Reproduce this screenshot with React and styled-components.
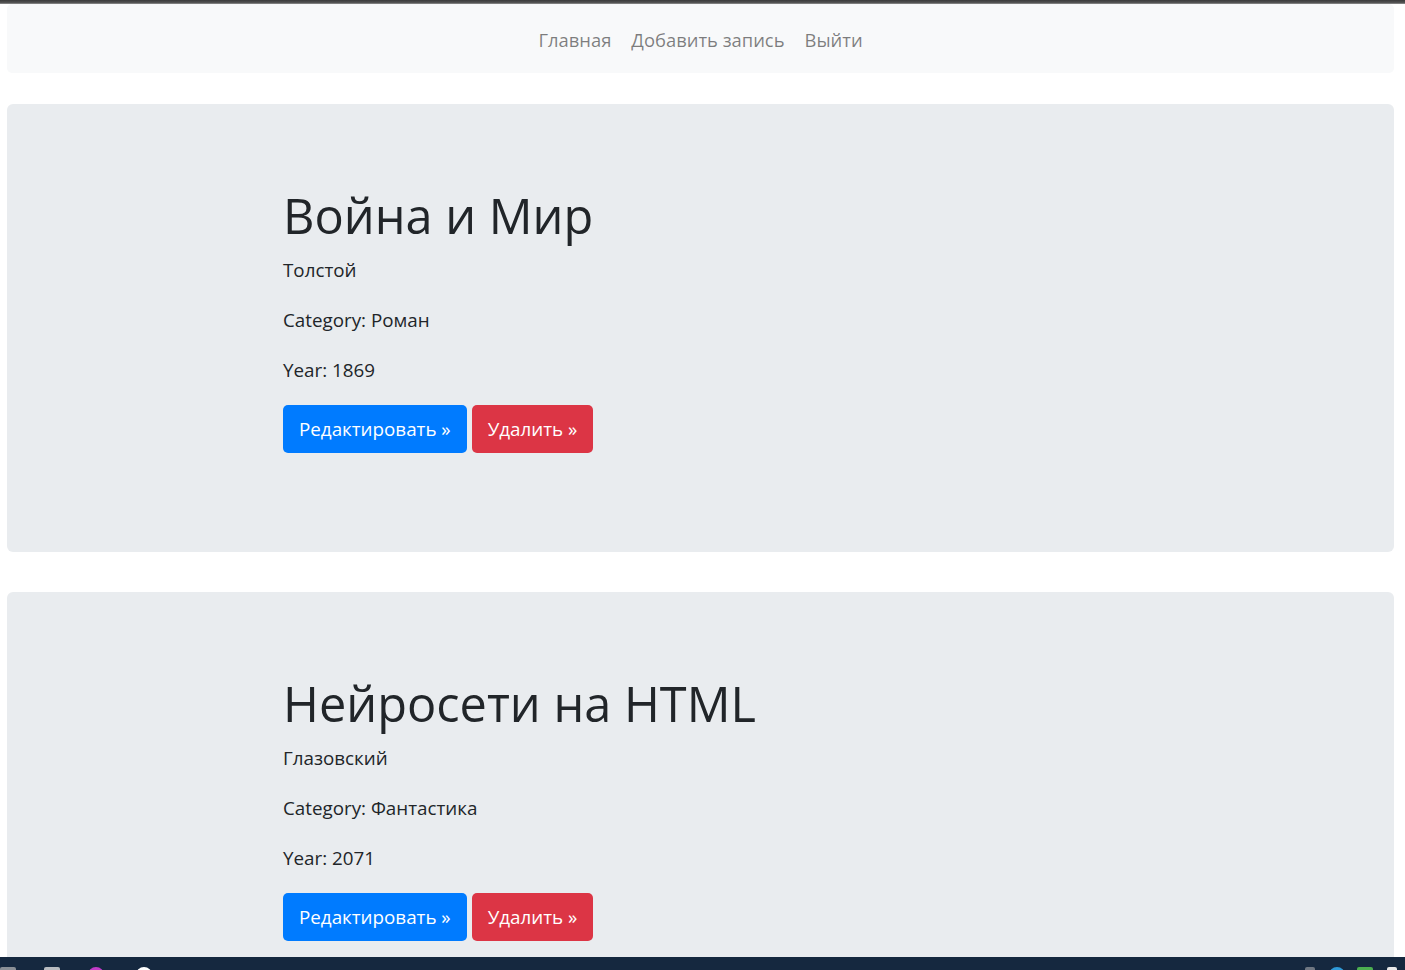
import styled, { createGlobalStyle } from "styled-components";

const GlobalStyle = createGlobalStyle`
    html, body {
        margin: 0;
        padding: 0;
        background: #fff;
        overflow: hidden;
    }
    body {
        font-family: "Open Sans", "Noto Sans", sans-serif;
        color: #212529;
    }
    * { box-sizing: border-box; }
`;

const books = [
    { title: "Война и Мир", author: "Толстой", category: "Роман", year: 1869 },
    { title: "Нейросети на HTML", author: "Глазовский", category: "Фантастика", year: 2071 },
];

export default function App() {
    return (
        <>
            <GlobalStyle />
            <TopEdge />
            <Page>
                <Navbar>
                    <NavLink href="#">Главная</NavLink>
                    <NavLink href="#">Добавить запись</NavLink>
                    <NavLink href="#">Выйти</NavLink>
                </Navbar>

                {books.map((b) => (
                    <Jumbotron key={b.title}>
                        <Inner>
                            <Title>{b.title}</Title>
                            <Text>{b.author}</Text>
                            <Text>Category: {b.category}</Text>
                            <Text>Year: {b.year}</Text>
                            <Actions>
                                <Button $variant="primary">Редактировать »</Button>
                                <Button $variant="danger">Удалить »</Button>
                            </Actions>
                        </Inner>
                    </Jumbotron>
                ))}
            </Page>
            <Taskbar>
                <TrayIcon $color="#8a8f96" $gap="0" />
                <TrayIcon $color="#b9bcc0" $gap="28px" />
                <TrayIcon $color="#c33cc8" $gap="28px" $round />
                <TrayIcon $color="#ffffff" $gap="32px" $round />
                <Spacer />
                <TrayIcon $color="#6f7782" $gap="0" $small />
                <TrayIcon $color="#2f9ad8" $gap="14px" $round />
                <TrayIcon $color="#4caf50" $gap="12px" />
                <TrayIcon $color="#e8e8e8" $gap="14px" $small />
            </Taskbar>
        </>
    );
}

const TopEdge = styled.div`
    height: 4px;
    background: linear-gradient(#3a3a3a, #555 70%, #9a9a9a);
`;

const Page = styled.div`
    padding: 0 11px 0 7px;
`;

const Navbar = styled.nav`
    height: 69px;
    background: #f8f9fa;
    border-radius: 5px;
    display: flex;
    justify-content: center;
    align-items: center;
    margin-bottom: 31px;
    padding-top: 2px;
`;

const NavLink = styled.a`
    font-size: 18.4px;
    color: rgba(0, 0, 0, 0.5);
    text-decoration: none;
    padding: 0 10px;
    line-height: 30px;
`;

const Jumbotron = styled.section`
    background: #e9ecef;
    border-radius: 6px;
    padding: 81px 0 79px;
    margin-bottom: 40px;
`;

const Inner = styled.div`
    padding-left: 276px;
`;

const Title = styled.h1`
    margin: 0 0 10px;
    font-size: 48.7px;
    font-weight: 500;
    line-height: 60px;
    color: #212529;
`;

const Text = styled.p`
    margin: 0 0 20px;
    font-size: 18.8px;
    line-height: 30px;
    color: #212529;
`;

const Actions = styled.div`
    display: flex;
    gap: 5px;
    margin-bottom: 20px;
`;

const Button = styled.a`
    display: inline-block;
    height: 48px;
    padding: 0 16px;
    line-height: 48px;
    font-size: 18.8px;
    border-radius: 5px;
    color: #fff;
    background: ${(p) => (p.$variant === "danger" ? "#dc3545" : "#007bff")};
    cursor: pointer;
`;

const Taskbar = styled.footer`
    position: fixed;
    left: 0;
    right: 0;
    bottom: 0;
    height: 13px;
    background: #15283f;
    display: flex;
    align-items: flex-start;
    padding: 10px 8px 0 0;
    overflow: hidden;
`;

const Spacer = styled.div`
    flex: 1;
`;

const TrayIcon = styled.span`
    flex: none;
    width: ${(p) => (p.$small ? "10px" : "16px")};
    height: 16px;
    margin-left: ${(p) => p.$gap};
    background: ${(p) => p.$color};
    border-radius: ${(p) => (p.$round ? "50%" : "2px")};
`;
